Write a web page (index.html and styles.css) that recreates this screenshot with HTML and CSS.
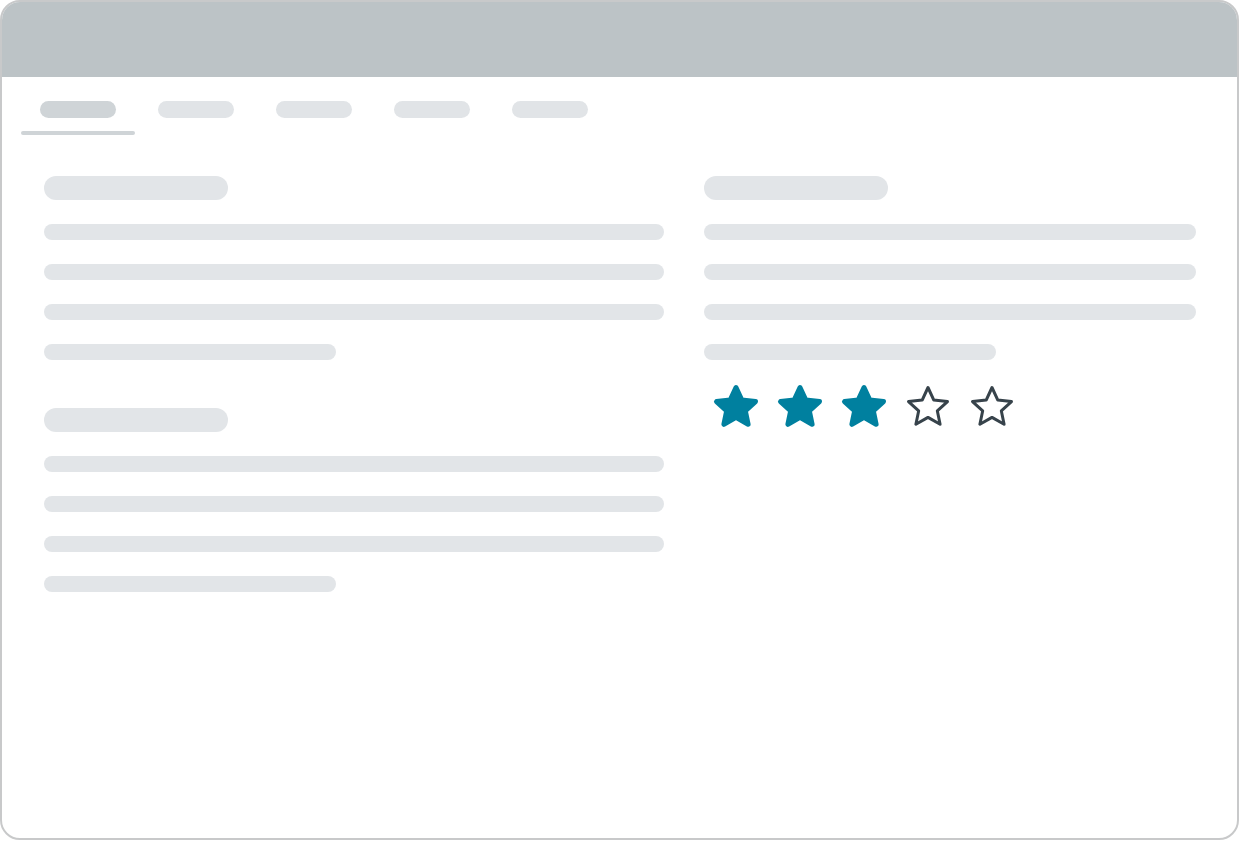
FILE: index.html
```html
<!DOCTYPE html>
<html lang="en">
<head>
<meta charset="utf-8">
<title>Rating skeleton</title>
<link rel="stylesheet" href="styles.css">
</head>
<body>
<div class="frame">
  <header class="topbar"></header>
  <nav class="tabs">
    <div class="tab active"><span class="pill"></span></div>
    <div class="tab"><span class="pill"></span></div>
    <div class="tab"><span class="pill"></span></div>
    <div class="tab"><span class="pill"></span></div>
    <div class="tab"><span class="pill"></span></div>
  </nav>
  <main class="content">
    <div class="column left">
      <section class="block">
        <div class="title"></div>
        <div class="line"></div>
        <div class="line"></div>
        <div class="line"></div>
        <div class="line short"></div>
      </section>
      <section class="block">
        <div class="title"></div>
        <div class="line"></div>
        <div class="line"></div>
        <div class="line"></div>
        <div class="line short"></div>
      </section>
    </div>
    <div class="column right">
      <section class="block">
        <div class="title"></div>
        <div class="line"></div>
        <div class="line"></div>
        <div class="line"></div>
        <div class="line short"></div>
        <div class="stars">
          <svg class="star filled" viewBox="0 0 64 48" width="64" height="48"><polygon points="32,3.5 37.8,16.1 51.5,17.6 41.3,26.8 44.1,40.3 32,33.4 19.9,40.3 22.7,26.8 12.5,17.6 26.2,16.1"/></svg>
          <svg class="star filled" viewBox="0 0 64 48" width="64" height="48"><polygon points="32,3.5 37.8,16.1 51.5,17.6 41.3,26.8 44.1,40.3 32,33.4 19.9,40.3 22.7,26.8 12.5,17.6 26.2,16.1"/></svg>
          <svg class="star filled" viewBox="0 0 64 48" width="64" height="48"><polygon points="32,3.5 37.8,16.1 51.5,17.6 41.3,26.8 44.1,40.3 32,33.4 19.9,40.3 22.7,26.8 12.5,17.6 26.2,16.1"/></svg>
          <svg class="star empty" viewBox="0 0 64 48" width="64" height="48"><polygon points="32,3.5 37.8,16.1 51.5,17.6 41.3,26.8 44.1,40.3 32,33.4 19.9,40.3 22.7,26.8 12.5,17.6 26.2,16.1"/></svg>
          <svg class="star empty" viewBox="0 0 64 48" width="64" height="48"><polygon points="32,3.5 37.8,16.1 51.5,17.6 41.3,26.8 44.1,40.3 32,33.4 19.9,40.3 22.7,26.8 12.5,17.6 26.2,16.1"/></svg>
        </div>
      </section>
    </div>
  </main>
</div>
</body>
</html>
```
FILE: styles.css
```css
* { box-sizing: border-box; }
html, body {
  margin: 0;
  padding: 0;
  background: #ffffff;
  font-family: "Liberation Sans", Arial, sans-serif;
}
.frame {
  width: 1239px;
  height: 840px;
  border: 2px solid #c8c9ca;
  border-radius: 20px;
  overflow: hidden;
  background: #ffffff;
  display: flex;
  flex-direction: column;
}
.topbar {
  height: 75px;
  background: #bcc3c6;
  flex: none;
}
.tabs {
  display: flex;
  gap: 4px;
  padding-left: 19px;
}
.tab {
  padding: 24px 19px 13px;
  position: relative;
}
.tab .pill {
  display: block;
  width: 76px;
  height: 17px;
  border-radius: 9px;
  background: #e1e4e7;
}
.tab.active .pill { background: #cfd4d7; }
.tab.active::after {
  content: "";
  position: absolute;
  left: 0;
  right: 0;
  bottom: -4px;
  height: 4px;
  border-radius: 2px;
  background: #cfd4d7;
}
.content {
  display: grid;
  grid-template-columns: 620px 492px;
  column-gap: 40px;
  padding: 45px 0 0 42px;
}
.column {
  display: flex;
  flex-direction: column;
  gap: 48px;
}
.block {
  display: flex;
  flex-direction: column;
  gap: 24px;
}
.title {
  width: 184px;
  height: 24px;
  border-radius: 12px;
  background: #e2e5e8;
}
.line {
  width: 100%;
  height: 16px;
  border-radius: 8px;
  background: #e2e5e8;
}
.line.short { width: 292px; }
.stars {
  display: flex;
  height: 48px;
}
.star { display: block; flex: none; }
.star.filled polygon {
  fill: #00809f;
  stroke: #00809f;
  stroke-width: 5;
  stroke-linejoin: round;
}
.star.empty polygon {
  fill: #ffffff;
  stroke: #37434b;
  stroke-width: 3;
  stroke-linejoin: round;
}
```
